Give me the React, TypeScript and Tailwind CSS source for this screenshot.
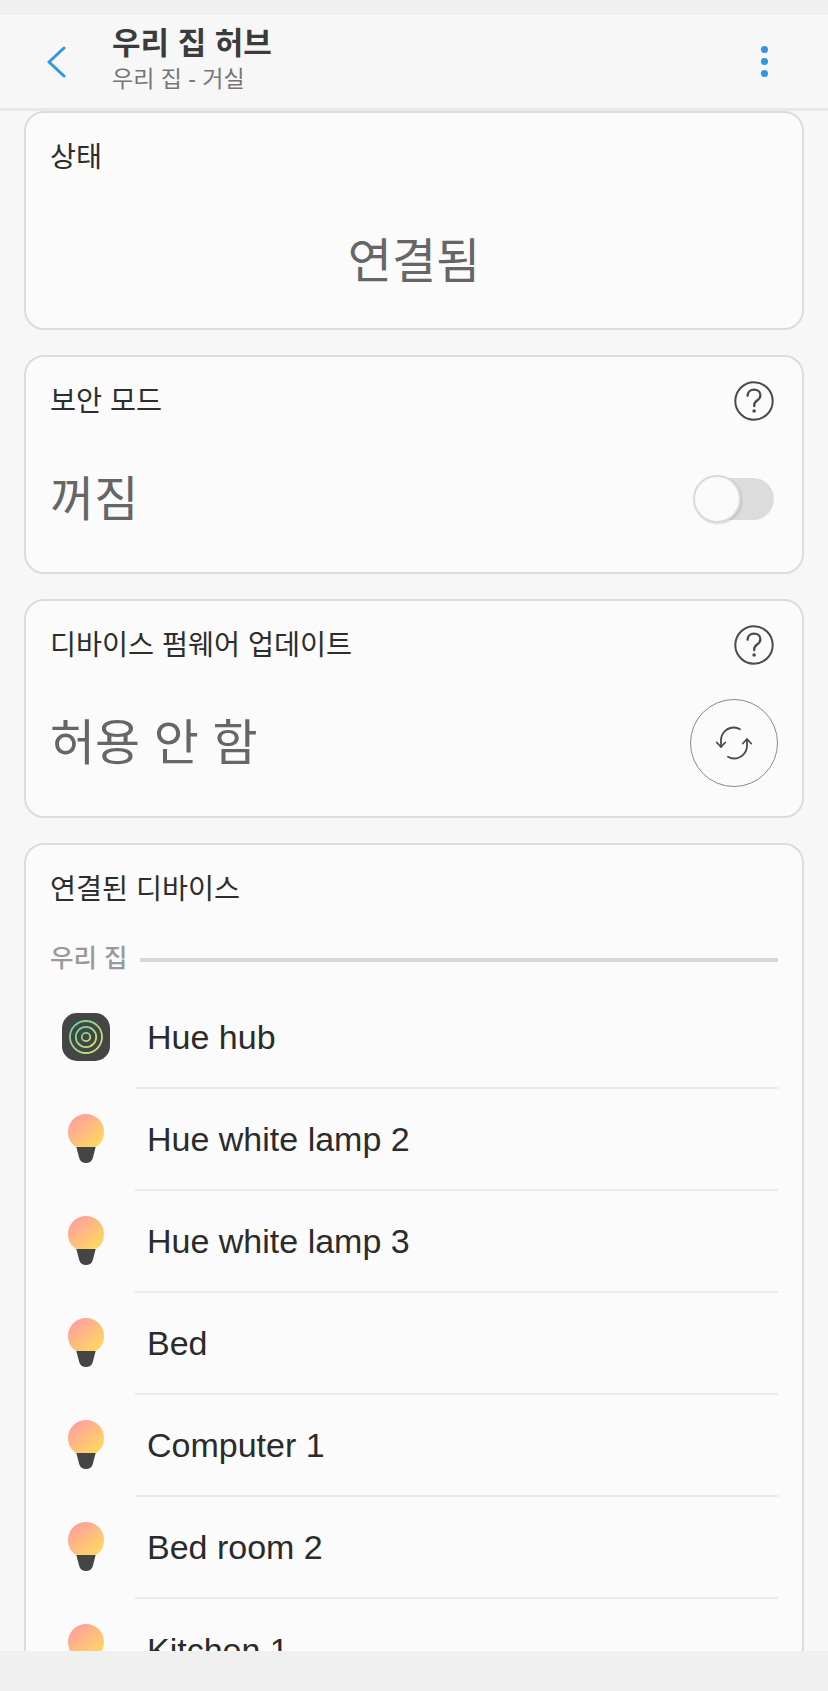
const FONT = "font-['Liberation_Sans','Noto_Sans_CJK_KR',sans-serif]";

const devices = ['Hue white lamp 2', 'Hue white lamp 3', 'Bed', 'Computer 1', 'Bed room 2', 'Kitchen 1'];

function HelpIcon() {
  return (
    <svg width="40" height="40" viewBox="0 0 40 40" fill="none">
      <circle cx="20" cy="20" r="18.7" stroke="#4a4a4a" strokeWidth="2" />
      <path
        d="M13.6 14.8c0-3.800 2.800-6.200 6.500-6.200 3.600 0 6.300 2.300 6.300 5.600 0 2.600-1.500 4-3.300 5.300-1.800 1.300-2.900 2.500-2.900 4.700v1"
        stroke="#4a4a4a"
        strokeWidth="2.300"
        strokeLinecap="round"
      />
      <circle cx="20.1" cy="30" r="1.800" fill="#4a4a4a" />
    </svg>
  );
}

function SyncIcon() {
  return (
    <svg width="40" height="34" viewBox="0 0 40 34" fill="none" stroke="#4a4a4a" strokeWidth="1.800" strokeLinecap="round" strokeLinejoin="round">
      <path d="M26 3.200C24.400 2.200 22.400 1.500 20 1.500 12.500 1.500 7 7.500 7 14.500v6" />
      <path d="M2.800 16.500L7 21l4.200-4.500" />
      <path d="M14 30.800c1.600 1 3.600 1.700 6 1.700 7.500 0 13-6 13-13v-6" />
      <path d="M28.800 17.500L33 13l4.200 4.500" />
    </svg>
  );
}

function HubIcon() {
  return (
    <svg width="48" height="48" viewBox="0 0 48 48" fill="none">
      <defs>
        <linearGradient id="hubRing" x1="0" y1="0" x2="1" y2="1">
          <stop offset="0" stopColor="#5fd3a0" />
          <stop offset="1" stopColor="#d8e56a" />
        </linearGradient>
      </defs>
      <rect x="0" y="0" width="48" height="48" rx="15" fill="#454545" />
      <circle cx="24" cy="24" r="16" stroke="url(#hubRing)" strokeWidth="1.800" />
      <circle cx="24" cy="24" r="10.200" stroke="url(#hubRing)" strokeWidth="1.800" />
      <circle cx="24" cy="24" r="4.200" stroke="url(#hubRing)" strokeWidth="1.800" />
    </svg>
  );
}

function BulbIcon({ id }: { id: string }) {
  return (
    <svg width="36" height="50" viewBox="0 0 36 50" fill="none">
      <defs>
        <linearGradient id={id} x1="0.15" y1="0.1" x2="0.85" y2="0.9">
          <stop offset="0" stopColor="#ff9f9f" />
          <stop offset="1" stopColor="#ffd760" />
        </linearGradient>
      </defs>
      <path d="M8.200 32.600h19.600L24.800 44c-.8 3.200-3.400 5-6.800 5s-6-1.800-6.800-5z" fill="#454545" />
      <path d="M8 33C3.200 30 0 24.800 0 18 0 8 8 0 18 0s18 8 18 18c0 6.800-3.200 12-8 15z" fill={`url(#${id})`} />
    </svg>
  );
}

function Card({ children }: { children: React.ReactNode }) {
  return <section className="rounded-[20px] border-2 border-[#dcdcdc] bg-[#fbfbfb]">{children}</section>;
}

function DeviceRow({ icon, name, last }: { icon: React.ReactNode; name: string; last?: boolean }) {
  return (
    <div className="flex h-[102px] items-stretch">
      <div className="flex w-[85px] shrink-0 items-center justify-center pr-[13px] pb-[2px]">{icon}</div>
      <div className={`flex flex-1 items-center pl-[12px] ${last ? '' : 'border-b-2 border-[#ebebeb]'}`}>
        <span className="text-[34px] leading-none text-[#2b2b2b]">{name}</span>
      </div>
    </div>
  );
}

export default function App() {
  return (
    <div className={`${FONT} flex h-[1691px] w-[828px] flex-col overflow-hidden bg-[#f7f7f7]`}>
      <div className="h-[15px] shrink-0 bg-[#f0f0f0]" />

      <header className="flex h-[96px] shrink-0 items-center border-b-[3px] border-[#e8e8e8] bg-[#f7f7f7]">
        <div className="w-[112px] pl-[46px]">
          <svg width="20" height="32" viewBox="0 0 20 32" fill="none">
            <path d="M18 2L3 16l15 14" stroke="#2f96e4" strokeWidth="3" strokeLinecap="round" strokeLinejoin="round" />
          </svg>
        </div>
        <div className="flex-1 pb-[7px]">
          <div className="text-[31px] leading-[42px] font-bold text-[#3b3b3b]">우리 집 허브</div>
          <div className="text-[23px] leading-[28px] text-[#767676]">우리 집 - 거실</div>
        </div>
        <div className="mr-[60px] flex flex-col gap-[5px]">
          <span className="size-[7px] rounded-full bg-[#2f96e4]" />
          <span className="size-[7px] rounded-full bg-[#2f96e4]" />
          <span className="size-[7px] rounded-full bg-[#2f96e4]" />
        </div>
      </header>

      <main className="flex min-h-0 flex-1 flex-col gap-[25px] overflow-hidden px-[24px]">
        <Card>
          <div className="h-[215px] px-[24px] pt-[26px]">
            <div className="text-[28.3px] leading-[36px] text-[#2d2d2d]">상태</div>
            <div className="mt-[52px] text-center text-[48px] leading-[70px] text-[#666666]">연결됨</div>
          </div>
        </Card>

        <Card>
          <div className="flex h-[215px] flex-col px-[24px] pt-[24px]">
            <div className="flex items-start justify-between pr-[4px]">
              <span className="mt-[2px] text-[28.3px] leading-[36px] text-[#2d2d2d]">보안 모드</span>
              <HelpIcon />
            </div>
            <div className="mt-[44px] flex items-center justify-between pr-[4px]">
              <span className="text-[48px] leading-[70px] text-[#666666]">꺼짐</span>
              <div className="relative mb-[3px] h-[42px] w-[80px] rounded-full bg-[#dcdcdc]">
                <span className="absolute top-[-3px] left-[-1px] size-[48px] rounded-full border-2 border-[#dadada] bg-[#fafafa] shadow-[1px_1px_2px_rgba(0,0,0,0.15)]" />
              </div>
            </div>
          </div>
        </Card>

        <Card>
          <div className="flex h-[215px] flex-col px-[24px] pt-[24px]">
            <div className="flex items-start justify-between pr-[4px]">
              <span className="mt-[2px] text-[28.3px] leading-[36px] text-[#2d2d2d]">디바이스 펌웨어 업데이트</span>
              <HelpIcon />
            </div>
            <div className="mt-[34px] flex items-center justify-between">
              <span className="text-[49px] leading-[70px] text-[#666666]">허용 안 함</span>
              <div className="flex size-[88px] items-center justify-center rounded-full border border-[#8a8a8a]">
                <SyncIcon />
              </div>
            </div>
          </div>
        </Card>

        <Card>
          <div className="px-[24px] pt-[26px]">
            <div className="text-[28.3px] leading-[36px] text-[#2d2d2d]">연결된 디바이스</div>
            <div className="mt-[35px] flex items-center gap-[13px]">
              <span className="text-[25.5px] leading-[32px] font-medium text-[#999999]">우리 집</span>
              <span className="mt-[3px] h-[4px] flex-1 bg-[#d8d8d8]" />
            </div>
            <div className="mt-[13px]">
              <DeviceRow icon={<HubIcon />} name="Hue hub" />
              {devices.map((name, i) => (
                <DeviceRow key={name} icon={<BulbIcon id={`bulb${i}`} />} name={name} last={i === devices.length - 1} />
              ))}
            </div>
          </div>
        </Card>
      </main>

      <div className="relative z-10 h-[40px] shrink-0 bg-[#f0f0f0]" />
    </div>
  );
}
